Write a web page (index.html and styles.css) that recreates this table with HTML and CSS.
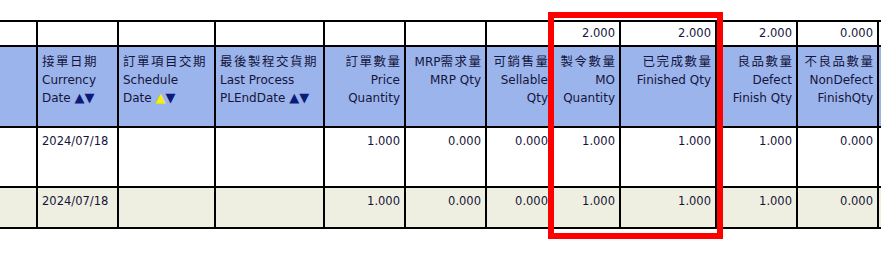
FILE: index.html
```html
<!DOCTYPE html>
<html lang="zh-Hant">
<head>
<meta charset="utf-8">
<title>Order grid</title>
<link rel="stylesheet" href="styles.css">
</head>
<body>
<div class="page">
  <div class="viewport">
    <div class="grid">
      <!-- totals row -->
      <div class="cell total"></div>
      <div class="cell total"></div>
      <div class="cell total"></div>
      <div class="cell total"></div>
      <div class="cell total"></div>
      <div class="cell total"></div>
      <div class="cell total"></div>
      <div class="cell total num">2.000</div>
      <div class="cell total num">2.000</div>
      <div class="cell total num">2.000</div>
      <div class="cell total num">0.000</div>
      <div class="cell total"></div>

      <!-- header row -->
      <div class="cell head"></div>
      <div class="cell head"><span class="zh">接單日期</span><br>Currency<br>Date <span class="arr">▲</span><span class="arr">▼</span></div>
      <div class="cell head"><span class="zh">訂單項目交期</span><br>Schedule<br>Date <span class="arr on">▲</span><span class="arr">▼</span></div>
      <div class="cell head"><span class="zh">最後製程交貨期</span><br>Last Process<br>PLEndDate <span class="arr">▲</span><span class="arr">▼</span></div>
      <div class="cell head right"><span class="zh">訂單數量</span><br>Price<br>Quantity</div>
      <div class="cell head right">MRP<span class="zh">需求量</span><br>MRP Qty</div>
      <div class="cell head right"><span class="zh">可銷售量</span><br>Sellable<br>Qty</div>
      <div class="cell head right"><span class="zh">製令數量</span><br>MO<br>Quantity</div>
      <div class="cell head right"><span class="zh">已完成數量</span><br>Finished Qty</div>
      <div class="cell head right"><span class="zh">良品數量</span><br>Defect<br>Finish Qty</div>
      <div class="cell head right"><span class="zh">不良品數量</span><br>NonDefect<br>FinishQty</div>
      <div class="cell head"></div>

      <!-- row 1 -->
      <div class="cell row"></div>
      <div class="cell row">2024/07/18</div>
      <div class="cell row"></div>
      <div class="cell row"></div>
      <div class="cell row num">1.000</div>
      <div class="cell row num">0.000</div>
      <div class="cell row num">0.000</div>
      <div class="cell row num">1.000</div>
      <div class="cell row num">1.000</div>
      <div class="cell row num">1.000</div>
      <div class="cell row num">0.000</div>
      <div class="cell row"></div>

      <!-- row 2 -->
      <div class="cell row alt"></div>
      <div class="cell row alt">2024/07/18</div>
      <div class="cell row alt"></div>
      <div class="cell row alt"></div>
      <div class="cell row alt num">1.000</div>
      <div class="cell row alt num">0.000</div>
      <div class="cell row alt num">0.000</div>
      <div class="cell row alt num">1.000</div>
      <div class="cell row alt num">1.000</div>
      <div class="cell row alt num">1.000</div>
      <div class="cell row alt num">0.000</div>
      <div class="cell row alt"></div>
    </div>
  </div>
  <div class="highlight"></div>
</div>
</body>
</html>
```

FILE: styles.css
```css
html, body {
  margin: 0;
  padding: 0;
  background: #ffffff;
}

.page {
  position: relative;
  width: 881px;
  height: 258px;
  overflow: hidden;
  font-family: "DejaVu Sans", "Noto Sans CJK TC", sans-serif;
}

.viewport {
  padding-top: 20px;
  width: 881px;
  overflow: hidden;
}

.grid {
  display: grid;
  grid-template-columns: 36px 79px 95px 107px 79px 79px 65px 65px 94px 79px 79px 60px;
  grid-template-rows: 23px 79px 58px 39px;
  gap: 2px;
  padding: 2px 0;
  background: #000000;
  width: max-content;
}

.cell {
  background: #ffffff;
  box-sizing: border-box;
  padding: 0 4px;
  white-space: nowrap;
  overflow: hidden;
}

.total {
  font-size: 11.5px;
  line-height: 23px;
  color: #14143a;
}

.num {
  text-align: right;
}

.head {
  background: #9bb4eb;
  font-size: 12px;
  line-height: 18px;
  padding-top: 5px;
  color: #15153d;
}

.right {
  text-align: right;
}

.zh {
  font-family: "Noto Sans CJK TC", sans-serif;
  font-size: 12.5px;
  letter-spacing: 1.5px;
}

.right .zh {
  margin-right: -1.5px;
}

.arr {
  font-size: 13px;
  line-height: 12px;
  color: #0c1a7a;
}

.arr.on {
  color: #f4f000;
}

.row {
  font-size: 11.5px;
  line-height: 18px;
  padding-top: 4px;
  color: #14143a;
}

.alt {
  background: #efefe1;
}

.highlight {
  position: absolute;
  left: 548px;
  top: 12px;
  width: 175px;
  height: 227px;
  box-sizing: border-box;
  border: 6px solid #ff0000;
  pointer-events: none;
}
```
